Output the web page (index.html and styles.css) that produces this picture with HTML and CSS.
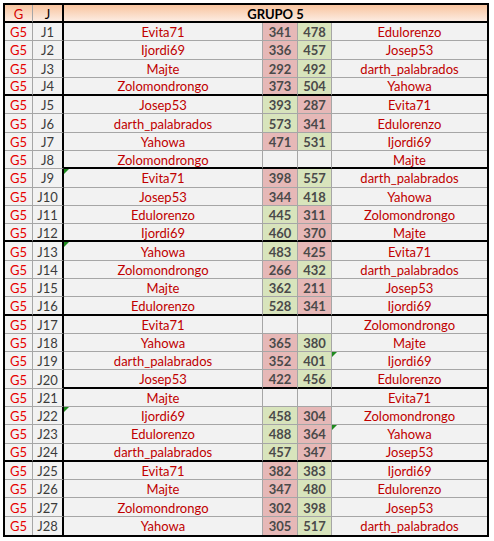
FILE: index.html
```html
<!DOCTYPE html>
<html>
<head>
<meta charset="utf-8">
<link rel="stylesheet" href="styles.css">
</head>
<body>
<div class="sheet">
  <div class="row head">
    <div class="c g">G</div>
    <div class="c j">J</div>
    <div class="c title">GRUPO 5</div>
  </div>
  <div class="row"><div class="c g">G5</div><div class="c j">J1</div><div class="c n">Evita71</div><div class="c s r">341</div><div class="c s v">478</div><div class="c n">Edulorenzo</div></div>
  <div class="row"><div class="c g">G5</div><div class="c j">J2</div><div class="c n">Ijordi69</div><div class="c s r">336</div><div class="c s v">457</div><div class="c n">Josep53</div></div>
  <div class="row"><div class="c g">G5</div><div class="c j">J3</div><div class="c n">Majte</div><div class="c s r">292</div><div class="c s v">492</div><div class="c n">darth_palabrados</div></div>
  <div class="row end full"><div class="c g">G5</div><div class="c j">J4</div><div class="c n">Zolomondrongo</div><div class="c s r">373</div><div class="c s v">504</div><div class="c n">Yahowa</div></div>
  <div class="row"><div class="c g">G5</div><div class="c j">J5</div><div class="c n">Josep53</div><div class="c s v">393</div><div class="c s r">287</div><div class="c n">Evita71</div></div>
  <div class="row"><div class="c g">G5</div><div class="c j">J6</div><div class="c n">darth_palabrados</div><div class="c s v">573</div><div class="c s r">341</div><div class="c n">Edulorenzo</div></div>
  <div class="row"><div class="c g">G5</div><div class="c j">J7</div><div class="c n">Yahowa</div><div class="c s r">471</div><div class="c s v">531</div><div class="c n">Ijordi69</div></div>
  <div class="row end"><div class="c g">G5</div><div class="c j">J8</div><div class="c n">Zolomondrongo</div><div class="c s"></div><div class="c s"></div><div class="c n">Majte</div></div>
  <div class="row"><div class="c g">G5</div><div class="c j">J9</div><div class="c n mark">Evita71</div><div class="c s r">398</div><div class="c s v">557</div><div class="c n">darth_palabrados</div></div>
  <div class="row"><div class="c g">G5</div><div class="c j">J10</div><div class="c n">Josep53</div><div class="c s r">344</div><div class="c s v">418</div><div class="c n">Yahowa</div></div>
  <div class="row"><div class="c g">G5</div><div class="c j">J11</div><div class="c n">Edulorenzo</div><div class="c s v">445</div><div class="c s r">311</div><div class="c n">Zolomondrongo</div></div>
  <div class="row end full"><div class="c g">G5</div><div class="c j">J12</div><div class="c n">Ijordi69</div><div class="c s v">460</div><div class="c s r">370</div><div class="c n">Majte</div></div>
  <div class="row"><div class="c g">G5</div><div class="c j">J13</div><div class="c n mark">Yahowa</div><div class="c s v">483</div><div class="c s r">425</div><div class="c n">Evita71</div></div>
  <div class="row"><div class="c g">G5</div><div class="c j">J14</div><div class="c n">Zolomondrongo</div><div class="c s r">266</div><div class="c s v">432</div><div class="c n">darth_palabrados</div></div>
  <div class="row"><div class="c g">G5</div><div class="c j">J15</div><div class="c n">Majte</div><div class="c s v">362</div><div class="c s r">211</div><div class="c n">Josep53</div></div>
  <div class="row end full"><div class="c g">G5</div><div class="c j">J16</div><div class="c n">Edulorenzo</div><div class="c s v">528</div><div class="c s r">341</div><div class="c n">Ijordi69</div></div>
  <div class="row"><div class="c g">G5</div><div class="c j">J17</div><div class="c n">Evita71</div><div class="c s"></div><div class="c s"></div><div class="c n">Zolomondrongo</div></div>
  <div class="row"><div class="c g">G5</div><div class="c j">J18</div><div class="c n">Yahowa</div><div class="c s r">365</div><div class="c s v">380</div><div class="c n">Majte</div></div>
  <div class="row"><div class="c g">G5</div><div class="c j">J19</div><div class="c n">darth_palabrados</div><div class="c s r">352</div><div class="c s v">401</div><div class="c n mark">Ijordi69</div></div>
  <div class="row end"><div class="c g">G5</div><div class="c j">J20</div><div class="c n">Josep53</div><div class="c s r">422</div><div class="c s v">456</div><div class="c n">Edulorenzo</div></div>
  <div class="row"><div class="c g">G5</div><div class="c j">J21</div><div class="c n">Majte</div><div class="c s"></div><div class="c s"></div><div class="c n">Evita71</div></div>
  <div class="row"><div class="c g">G5</div><div class="c j">J22</div><div class="c n mark">Ijordi69</div><div class="c s v">458</div><div class="c s r">304</div><div class="c n">Zolomondrongo</div></div>
  <div class="row"><div class="c g">G5</div><div class="c j">J23</div><div class="c n">Edulorenzo</div><div class="c s v">488</div><div class="c s r">364</div><div class="c n mark">Yahowa</div></div>
  <div class="row end full"><div class="c g">G5</div><div class="c j">J24</div><div class="c n">darth_palabrados</div><div class="c s v">457</div><div class="c s r">347</div><div class="c n">Josep53</div></div>
  <div class="row"><div class="c g">G5</div><div class="c j">J25</div><div class="c n">Evita71</div><div class="c s r">382</div><div class="c s v">383</div><div class="c n">Ijordi69</div></div>
  <div class="row"><div class="c g">G5</div><div class="c j">J26</div><div class="c n">Majte</div><div class="c s r">347</div><div class="c s v">480</div><div class="c n">Edulorenzo</div></div>
  <div class="row"><div class="c g">G5</div><div class="c j">J27</div><div class="c n">Zolomondrongo</div><div class="c s r">302</div><div class="c s v">398</div><div class="c n">Josep53</div></div>
  <div class="row last"><div class="c g">G5</div><div class="c j">J28</div><div class="c n">Yahowa</div><div class="c s r">305</div><div class="c s v">517</div><div class="c n">darth_palabrados</div></div>
</div>
</body>
</html>
```

FILE: styles.css
```css
html, body {
  margin: 0;
  padding: 0;
  background: #ffffff;
}
body {
  padding: 3px;
  font-family: Lato, "Open Sans", sans-serif;
  font-size: 13px;
}
.sheet {
  box-sizing: border-box;
  width: 486px;
  height: 534px;
  border: 2px solid #000;
  background: #f2f2f2;
  display: grid;
  grid-template-rows: 18px repeat(28, 1fr);
}
.row {
  display: grid;
  grid-template-columns: 28px 31px 199px 35px 34px 155px;
  min-height: 0;
}
.c {
  box-sizing: border-box;
  display: flex;
  align-items: center;
  justify-content: center;
  border-bottom: 1px solid #a6a6a6;
  border-right: 1px solid #a6a6a6;
  padding-top: 2px;
  line-height: 1;
  white-space: nowrap;
  position: relative;
  color: #c00000;
}
.c:last-child { border-right: none; }
.c.j {
  border-right: 2px solid #000;
  color: #3b3b3b;
}
.c.g { color: #e60000; }
.c.s {
  font-weight: 700;
  color: #4a4a4a;
}
.c.r { background: #e6b8b7; }
.c.v { background: #d8e4bc; }
.row.end .c:nth-child(n+3) { border-bottom: 2px solid #000; }
.row.full .c { border-bottom: 2px solid #000; }
.row.last .c { border-bottom: none; }

.head .c {
  border-bottom: 2px solid #000;
  background: linear-gradient(#f8c49e, #fcece2);
  font-weight: 700;
  color: #000;
}
.head .c.g { color: #d40000; font-weight: 400; }
.head .c.j { font-weight: 400; }
.head .title {
  grid-column: 3 / span 4;
  border-right: none;
}
.mark::before {
  content: "";
  position: absolute;
  left: 0;
  top: 0;
  width: 0;
  height: 0;
  border-top: 5px solid #1f8a1f;
  border-right: 5px solid transparent;
}
```
